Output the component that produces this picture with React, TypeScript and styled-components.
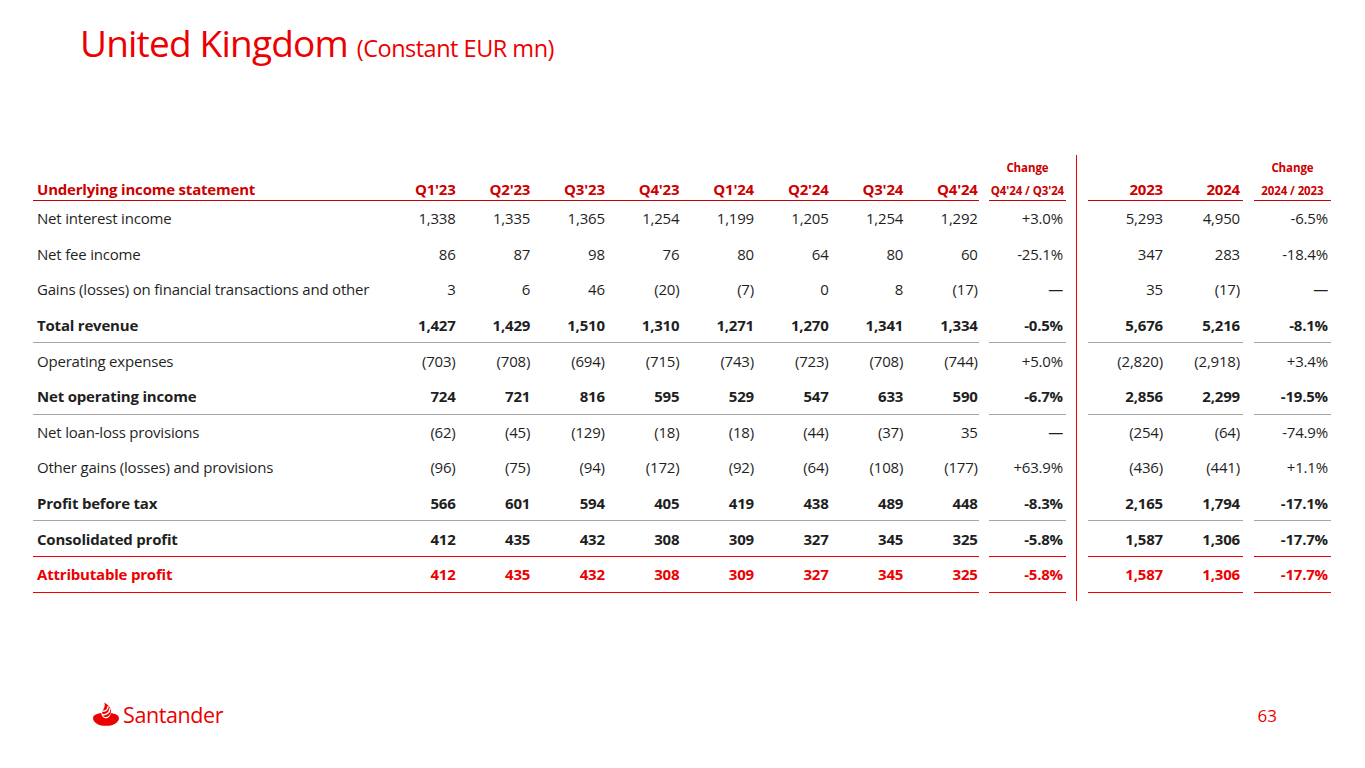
import React from "react";
import styled, { createGlobalStyle } from "styled-components";

const red = "#ec0000";
const darkRed = "#cc0000";
const ink = "#1f1f1f";
const grey = "#a6a6a6";

const GlobalStyle = createGlobalStyle`
    html, body {
        margin: 0;
        padding: 0;
        background: #ffffff;
    }
    body {
        font-family: "Open Sans", "Noto Sans", "Liberation Sans", sans-serif;
        color: ${ink};
    }
`;

const Slide = styled.main`
    width: 1365px;
    height: 768px;
    box-sizing: border-box;
    display: flex;
    flex-direction: column;
    padding: 18px 34px 0 33px;
`;

const Title = styled.h1`
    margin: 0 0 0 47px;
    font-weight: 400;
    font-size: 37px;
    letter-spacing: -0.8px;
    color: ${red};
    line-height: 50px;

    span {
        font-size: 23.5px;
        letter-spacing: -0.5px;
    }
`;

const TableWrap = styled.section`
    margin-top: 82px;
    display: flex;
    flex-direction: column;
`;

const COLS = "349px repeat(8, 74.6px) 10.2px 77px 22px 78px 77px 11px 77px";

const Row = styled.div<{ $h: number }>`
    display: grid;
    grid-template-columns: ${COLS};
    height: ${(p) => p.$h}px;
`;

type Line = "none" | "grey" | "red";

const Cell = styled.div<{
    $line?: Line;
    $bold?: boolean;
    $color?: string;
    $left?: boolean;
    $tight?: boolean;
}>`
    display: flex;
    align-items: center;
    justify-content: ${(p) => (p.$left ? "flex-start" : "flex-end")};
    padding: ${(p) =>
        p.$left ? "0 0 0 4px" : p.$tight ? "0 1px 0 0" : "0 3px 0 0"};
    font-size: 15px;
    letter-spacing: -0.2px;
    white-space: nowrap;
    font-weight: ${(p) => (p.$bold ? 700 : 400)};
    color: ${(p) => p.$color || ink};
    border-bottom: 1px solid
        ${(p) =>
            p.$line === "red" ? red : p.$line === "grey" ? grey : "transparent"};
`;

const HeadCell = styled.div<{ $left?: boolean; $tight?: boolean }>`
    display: flex;
    flex-direction: column;
    justify-content: flex-end;
    align-items: ${(p) => (p.$left ? "flex-start" : "flex-end")};
    padding: ${(p) =>
        p.$left ? "0 0 1px 4px" : p.$tight ? "0 1px 1px 0" : "0 3px 1px 0"};
    border-bottom: 1.5px solid ${darkRed};
    color: ${darkRed};
    font-weight: 700;
    font-size: 15px;
    letter-spacing: -0.2px;
    white-space: nowrap;
`;

const ChangeHead = styled(HeadCell)`
    align-items: center;
    padding: 0 0 2px 0;
    font-size: 11.5px;
    letter-spacing: -0.1px;

    small {
        font-size: 11.5px;
        font-weight: 700;
        margin-bottom: 8px;
    }
`;

const Gap = styled.div``;

const Divider = styled.div`
    display: flex;
    justify-content: center;

    &::before {
        content: "";
        width: 1px;
        background: ${red};
    }
`;

const Filler = styled.div`
    grid-column: 1 / 12;
`;

const Footer = styled.footer`
    margin-top: auto;
    height: 68px;
    display: flex;
    justify-content: space-between;
    align-items: flex-start;
    padding: 0 54px 0 59px;
`;

const Logo = styled.div`
    display: flex;
    align-items: center;
    gap: 3px;
    color: ${red};
    font-size: 21.5px;
    letter-spacing: -0.4px;
    font-weight: 500;

    svg {
        width: 28px;
        height: 25px;
    }
`;

const PageNo = styled.div`
    color: ${red};
    font-size: 17px;
    padding-top: 4px;
`;

type DataRow = {
    label: string;
    q: string[];
    chq: string;
    y: string[];
    chy: string;
    bold?: boolean;
    color?: string;
    line: Line;
};

const rows: DataRow[] = [
    { label: "Net interest income", q: ["1,338", "1,335", "1,365", "1,254", "1,199", "1,205", "1,254", "1,292"], chq: "+3.0%", y: ["5,293", "4,950"], chy: "-6.5%", line: "none" },
    { label: "Net fee income", q: ["86", "87", "98", "76", "80", "64", "80", "60"], chq: "-25.1%", y: ["347", "283"], chy: "-18.4%", line: "none" },
    { label: "Gains (losses) on financial transactions and other", q: ["3", "6", "46", "(20)", "(7)", "0", "8", "(17)"], chq: "—", y: ["35", "(17)"], chy: "—", line: "none" },
    { label: "Total revenue", q: ["1,427", "1,429", "1,510", "1,310", "1,271", "1,270", "1,341", "1,334"], chq: "-0.5%", y: ["5,676", "5,216"], chy: "-8.1%", bold: true, line: "grey" },
    { label: "Operating expenses", q: ["(703)", "(708)", "(694)", "(715)", "(743)", "(723)", "(708)", "(744)"], chq: "+5.0%", y: ["(2,820)", "(2,918)"], chy: "+3.4%", line: "none" },
    { label: "Net operating income", q: ["724", "721", "816", "595", "529", "547", "633", "590"], chq: "-6.7%", y: ["2,856", "2,299"], chy: "-19.5%", bold: true, line: "grey" },
    { label: "Net loan-loss provisions", q: ["(62)", "(45)", "(129)", "(18)", "(18)", "(44)", "(37)", "35"], chq: "—", y: ["(254)", "(64)"], chy: "-74.9%", line: "none" },
    { label: "Other gains (losses) and provisions", q: ["(96)", "(75)", "(94)", "(172)", "(92)", "(64)", "(108)", "(177)"], chq: "+63.9%", y: ["(436)", "(441)"], chy: "+1.1%", line: "none" },
    { label: "Profit before tax", q: ["566", "601", "594", "405", "419", "438", "489", "448"], chq: "-8.3%", y: ["2,165", "1,794"], chy: "-17.1%", bold: true, line: "grey" },
    { label: "Consolidated profit", q: ["412", "435", "432", "308", "309", "327", "345", "325"], chq: "-5.8%", y: ["1,587", "1,306"], chy: "-17.7%", bold: true, line: "red" },
    { label: "Attributable profit", q: ["412", "435", "432", "308", "309", "327", "345", "325"], chq: "-5.8%", y: ["1,587", "1,306"], chy: "-17.7%", bold: true, color: red, line: "red" },
];

const quarters = ["Q1'23", "Q2'23", "Q3'23", "Q4'23", "Q1'24", "Q2'24", "Q3'24", "Q4'24"];

const Flame = () => (
    <svg viewBox="0 0 24 22" aria-hidden="true">
        <path
            fill={red}
            d="M0.6 14 C0.6 11.4 4 10.2 7.8 9.6 C8.1 12.4 9.9 14.3 12 14.3 C14.1 14.3 15.9 12.4 16.2 9.6 C20 10.2 23.4 11.4 23.4 14 C23.4 18.2 18.2 21 12 21 C5.8 21 0.6 18.2 0.6 14 Z"
        />
        <path
            fill={red}
            d="M10.6 0.4 C14.8 3.2 17.8 6.6 15.8 10.4 C14.9 12 13.6 13.2 12 13.2 C9.9 13.2 8.3 11.5 8.7 9.2 C9.1 6.3 11.8 4.6 10.6 0.4 Z"
        />
        <path
            d="M8.9 7.9 C11.5 8.6 14.1 6.4 13.7 3.7 M8.6 11 C11.8 11.8 15.8 9.4 15.2 5.6"
            stroke="#ffffff"
            strokeWidth="1.2"
            fill="none"
        />
    </svg>
);

const App = () => {
    return (
        <>
            <GlobalStyle />
            <Slide>
                <Title>
                    United Kingdom <span>(Constant EUR mn)</span>
                </Title>
                <TableWrap>
                    <Row $h={46}>
                        <HeadCell $left>Underlying income statement</HeadCell>
                        {quarters.map((q) => (
                            <HeadCell key={q} $tight>
                                {q}
                            </HeadCell>
                        ))}
                        <Gap />
                        <ChangeHead>
                            <small>Change</small>
                            Q4'24 / Q3'24
                        </ChangeHead>
                        <Divider />
                        <HeadCell>2023</HeadCell>
                        <HeadCell>2024</HeadCell>
                        <Gap />
                        <ChangeHead>
                            <small>Change</small>
                            2024 / 2023
                        </ChangeHead>
                    </Row>
                    {rows.map((r) => (
                        <Row $h={35.6} key={r.label}>
                            <Cell $left $line={r.line} $bold={r.bold} $color={r.color}>
                                {r.label}
                            </Cell>
                            {r.q.map((v, i) => (
                                <Cell key={i} $tight $line={r.line} $bold={r.bold} $color={r.color}>
                                    {v}
                                </Cell>
                            ))}
                            <Gap />
                            <Cell $line={r.line} $bold={r.bold} $color={r.color}>
                                {r.chq}
                            </Cell>
                            <Divider />
                            {r.y.map((v, i) => (
                                <Cell key={i} $line={r.line} $bold={r.bold} $color={r.color}>
                                    {v}
                                </Cell>
                            ))}
                            <Gap />
                            <Cell $line={r.line} $bold={r.bold} $color={r.color}>
                                {r.chy}
                            </Cell>
                        </Row>
                    ))}
                    <Row $h={8}>
                        <Filler />
                        <Divider />
                    </Row>
                </TableWrap>
                <Footer>
                    <Logo>
                        <Flame />
                        Santander
                    </Logo>
                    <PageNo>63</PageNo>
                </Footer>
            </Slide>
        </>
    );
};

export default App;
